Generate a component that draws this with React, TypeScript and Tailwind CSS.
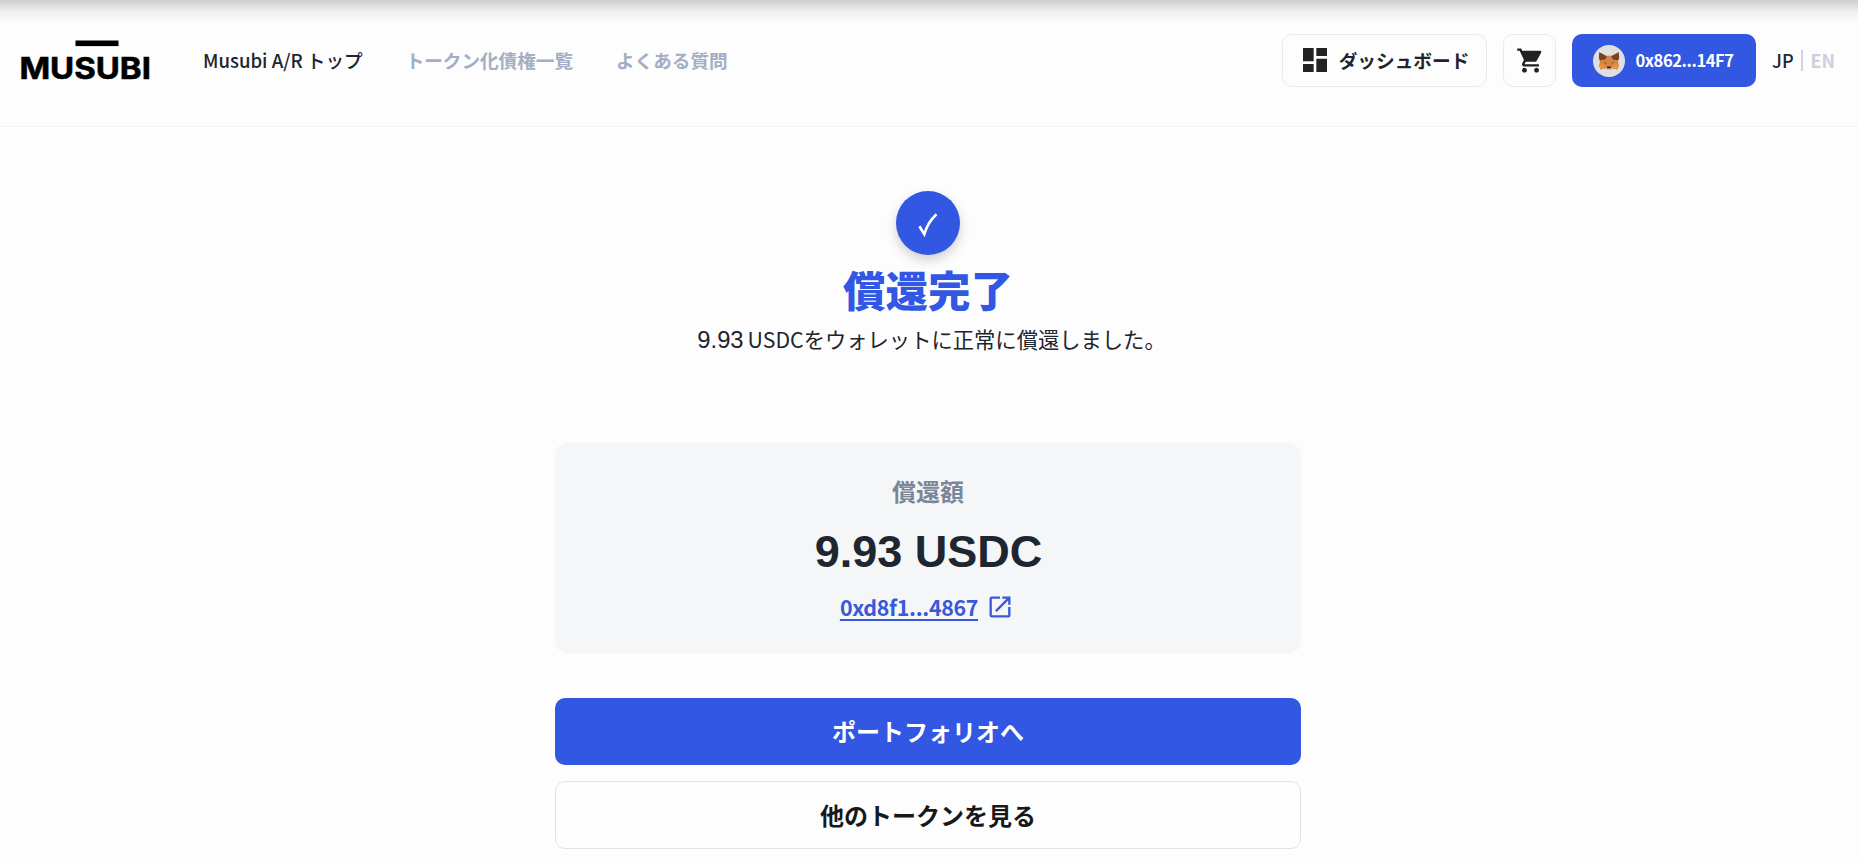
import React from "react";
import { MdDashboard, MdOpenInNew, MdShoppingCart } from "react-icons/md";

const Logo: React.FC = () => (
  <svg width="142" height="52" viewBox="0 0 142 52" className="shrink-0">
    <rect x="59.5" y="0.5" width="43" height="5.6" fill="#000" />
    <text
      x="3.4"
      y="38.7"
      textLength="131.5"
      lengthAdjust="spacingAndGlyphs"
      fontSize="30"
      fontWeight="700"
      fill="#000"
      stroke="#000"
      strokeWidth="0.6"
      className="font-['Inter',sans-serif]"
    >
      MUSUBI
    </text>
  </svg>
);

const FoxIcon: React.FC = () => (
  <svg width="32" height="32" viewBox="0 0 32 32" className="shrink-0">
    <circle cx="16" cy="16" r="16" fill="#dfdfe1" />
    <path d="M6.3 7.2L13.6 10.8H18.2L25.7 7.2L26.3 12.5L25 17L26 20.5L24.5 24.5L19.5 23.6L17.8 24.6H14.2L12.5 23.6L7.5 24.5L6 20.5L7 17L5.7 12.5Z" fill="#d98340" />
    <path d="M6.3 7.2L13.8 11.4L12 14.6L6.8 15.2L6 12.5Z" fill="#6f4529" />
    <path d="M25.7 7.2L18.2 11.4L20 14.6L25.2 15.2L26 12.5Z" fill="#6f4529" />
    <path d="M6.2 20.3L10.5 19.2L12.5 23.6L7.5 24.5Z" fill="#e8924b" />
    <path d="M25.8 20.3L21.5 19.2L19.5 23.6L24.5 24.5Z" fill="#e8924b" />
    <path d="M10.8 17L13.6 18L13 19Z" fill="#5a4636" />
    <path d="M21.2 17L18.4 18L19 19Z" fill="#5a4636" />
    <path d="M12.6 22.8L14.2 21.4H17.8L19.4 22.8L17.8 24.6H14.2Z" fill="#c9b6a6" />
    <path d="M14 21.4H18L17.8 23.2H14.2Z" fill="#1c1a1a" />
  </svg>
);

const Header: React.FC = () => (
  <header className="flex h-[127px] items-start justify-between border-b border-[#f1f2f4] bg-gradient-to-b from-[#cfcfcf] via-[#f0f0f0] via-[12px] to-[#fdfdfd] to-[24px] pl-[16px] pr-[23px]">
    <div className="flex items-start">
      <div className="pt-[40px]">
        <Logo />
      </div>
      <nav className="flex gap-[43px] pl-[45px] pt-[46px] text-[18.6px] leading-[28px] font-medium text-[#a3aec4]">
        <a className="text-[#20242e]">Musubi A/R トップ</a>
        <a className="font-bold">トークン化債権一覧</a>
        <a className="font-bold">よくある質問</a>
      </nav>
    </div>

    <div className="flex items-center gap-4 pt-[34px] text-[18.67px] font-medium text-[#20242e]">
      <button className="flex h-[53px] w-[205px] items-center justify-center gap-[12px] rounded-[10px] border border-[#e6eaf2] pb-px pl-[3px]">
        <MdDashboard size={32} color="#222" className="-ml-1 -mr-1" />
        <span className="whitespace-nowrap font-bold">ダッシュボード</span>
      </button>
      <button className="flex h-[53px] w-[53px] items-center justify-center rounded-[10px] border border-[#e6eaf2] pl-[2px]">
        <MdShoppingCart size={29} color="#222" />
      </button>
      <button className="flex h-[53px] w-[184px] items-center justify-center gap-[10px] rounded-[10px] bg-[#3257e2] pr-px text-[16.5px] font-bold tracking-[-0.025em] text-white">
        <FoxIcon />
        0x862...14F7
      </button>
      <div className="flex w-[63px] items-center justify-between text-[18px]">
        <span>JP</span>
        <span className="h-[21px] w-[2px] bg-[#cfd4e0]" />
        <span className="font-bold text-[#cbd0de]">EN</span>
      </div>
    </div>
  </header>
);

const App: React.FC = () => {
  return (
    <div
      lang="ja"
      className="h-[862px] overflow-hidden bg-[#fdfdfd] font-['Noto_Sans_CJK_JP',sans-serif] text-[#20242e]"
    >
      <Header />

      <main className="mx-auto flex w-[746px] flex-col items-center pt-[64px] -translate-x-px">
        {/* Result */}
        <div className="flex h-[64px] w-[64px] items-center justify-center rounded-full bg-[#3257e2] shadow-[0_5px_12px_rgba(0,0,0,0.18)]">
          <svg width="20" height="24" viewBox="0 0 20 24" fill="none" className="mt-[3px]">
            <path
              d="M1.4 13.2L6.3 21.2Q9.5 9.5 18.5 1.2"
              stroke="#fff"
              strokeWidth="2.6"
            />
          </svg>
        </div>
        <h1 className="mt-[6px] text-[42.5px] leading-[56px] font-black text-[#3257e2]">
          償還完了
        </h1>
        <p className="mt-[6px] flex items-baseline whitespace-nowrap pl-[7px] text-[21.3px] leading-[32px]">
          <span className="mr-[4px] font-['Liberation_Sans',sans-serif] text-[23.8px]">
            9.93
          </span>
          USDCをウォレットに正常に償還しました。
        </p>

        {/* Amount */}
        <section className="mt-[86px] flex h-[212px] w-full flex-col items-center rounded-[14px] bg-[#f4f6f8]">
          <h2 className="mt-[31px] text-[24px] leading-[36px] font-bold text-[#7b8698]">
            償還額
          </h2>
          <p className="mt-[16px] ml-[1px] font-['Liberation_Sans',sans-serif] text-[45px] leading-[54px] font-bold text-[#20262f]">
            9.93 USDC
          </p>
          <a className="mt-[11px] mr-[2px] flex items-center gap-[8px] text-[#3a59d6]">
            <span className="text-[21.4px] leading-[34px] font-bold tracking-[-0.015em] underline decoration-2 underline-offset-[3px]">
              0xd8f1...4867
            </span>
            <MdOpenInNew size={28} />
          </a>
        </section>

        {/* Actions */}
        <button className="mt-[44px] h-[67px] w-full shrink-0 rounded-[10px] bg-[#3257e2] pb-[2px] text-[24px] font-bold text-white">
          ポートフォリオへ
        </button>
        <button className="mt-[16px] h-[68px] w-full shrink-0 rounded-[10px] border border-[#e1e2e4] text-[24px] font-bold text-[#17181a]">
          他のトークンを見る
        </button>
      </main>
    </div>
  );
};

export default App;
